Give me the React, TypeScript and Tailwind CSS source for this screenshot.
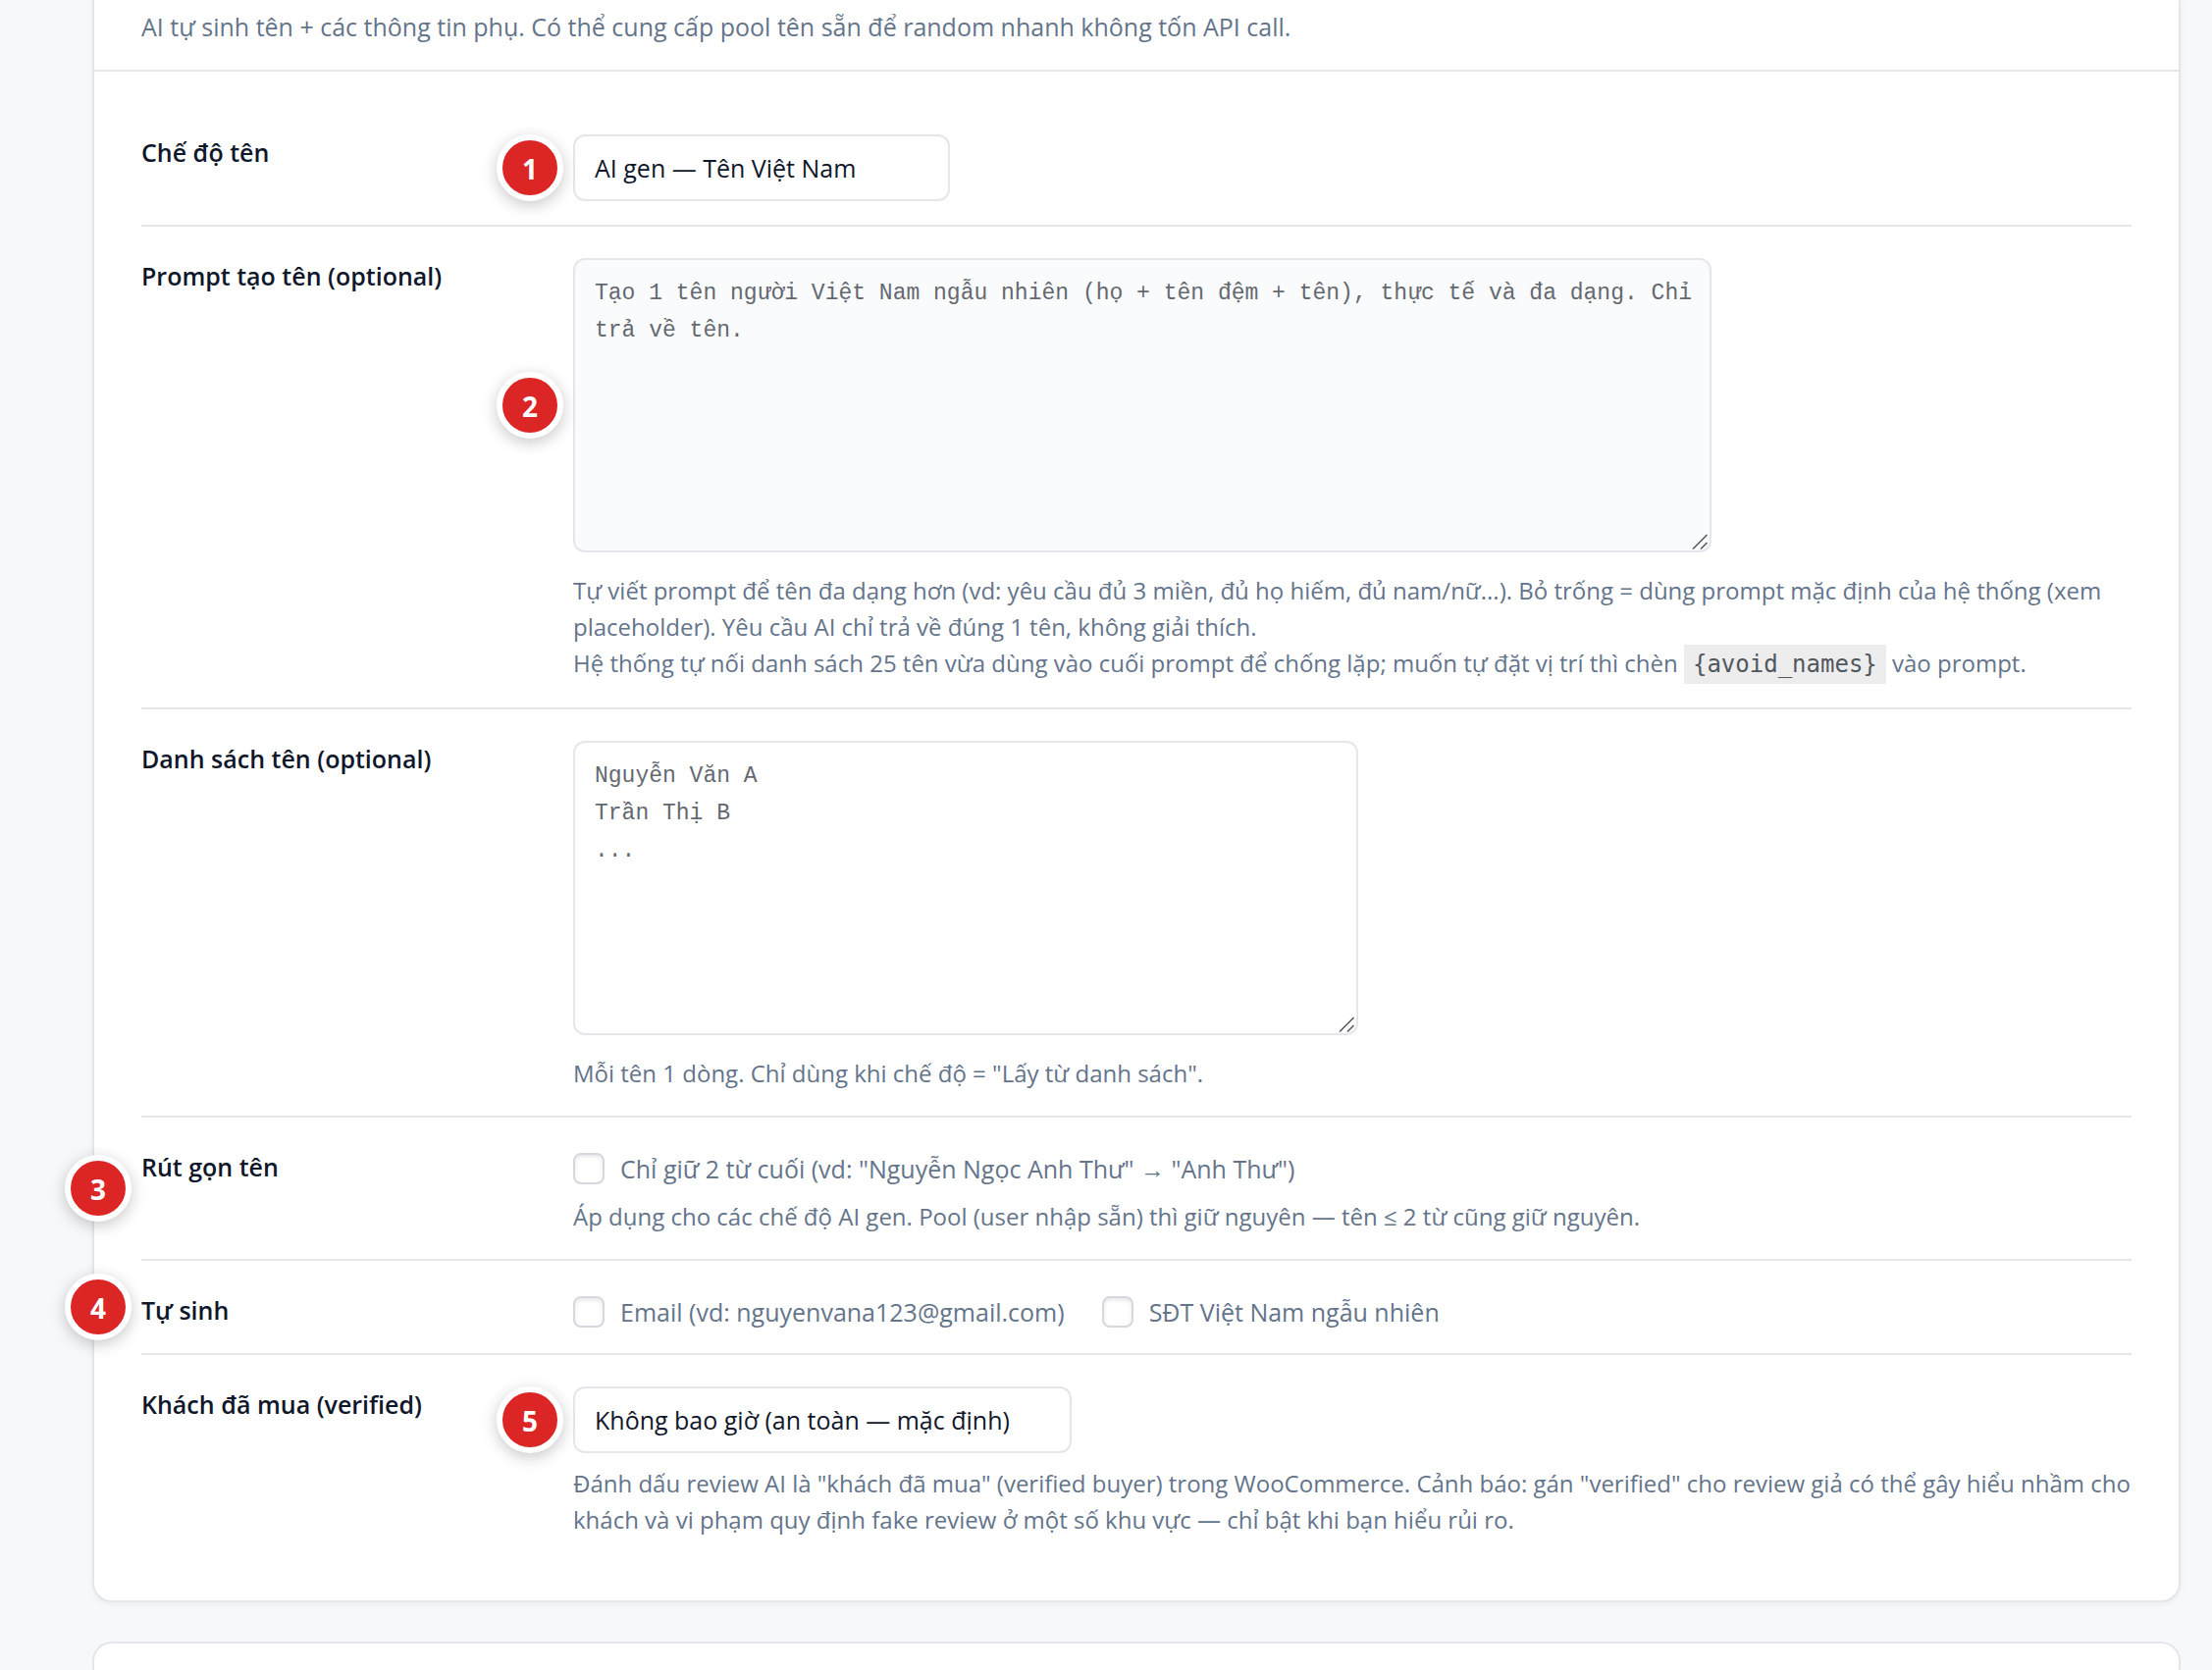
import type { ReactNode } from 'react';

const HELP = 'text-[24px] leading-[37px] text-[#64748b]';
const SELECT =
  'block h-[68px] appearance-none rounded-xl border-2 border-[#e4e6eb] bg-white px-5 pt-[2px] text-[25px] text-[#0f172a]';
const TEXTAREA =
  "block h-[300px] w-full resize-none rounded-xl border-2 border-[#e4e6eb] py-[15px] pl-5 pr-2 font-['Liberation_Mono',monospace] text-[23px] leading-[38px] text-[#1e293b] placeholder:text-[#646970]";

function Badge({ n }: { n: number }) {
  return (
    <span className="absolute right-full top-1/2 mr-[10px] flex size-[68px] -translate-y-1/2 items-center justify-center rounded-full border-6 border-white bg-[#dc2626] pt-[2px] text-[28px] font-bold text-white shadow-[0_4px_16px_rgba(0,0,0,0.22)]">
      {n}
    </span>
  );
}

function ResizeGrip() {
  return (
    <svg
      className="pointer-events-none absolute bottom-[3px] right-[4px]"
      width="16"
      height="16"
      viewBox="0 0 16 16"
      stroke="#50555c"
      strokeWidth="1.5"
      aria-hidden="true"
    >
      <path d="M1 15.5 15.5 1M9 15.5 15.5 9" />
    </svg>
  );
}

type RowProps = {
  label: string;
  htmlFor?: string;
  badge?: number;
  last?: boolean;
  children: ReactNode;
};

function Row({ label, htmlFor, badge, last, children }: RowProps) {
  const labelClass = 'text-[25px] leading-[37px] font-semibold text-[#0f172a]';
  return (
    <div
      className={
        last
          ? 'relative grid grid-cols-[440px_minmax(0,1fr)] pt-8 pb-6'
          : 'relative grid grid-cols-[440px_minmax(0,1fr)] border-b-2 border-[#e4e6eb] pt-8 pb-6'
      }
    >
      {badge && <Badge n={badge} />}
      {htmlFor ? (
        <label htmlFor={htmlFor} className={labelClass}>
          {label}
        </label>
      ) : (
        <div className={labelClass}>{label}</div>
      )}
      <div>{children}</div>
    </div>
  );
}

function Check({ children }: { children: ReactNode }) {
  return (
    <label className="flex items-center gap-4 pt-[2px] text-[25px] leading-9 text-[#64748b]">
      <input
        type="checkbox"
        className="size-8 appearance-none rounded-lg border-2 border-[#d5d8de] bg-white shadow-[inset_0_2px_4px_rgba(0,0,0,0.1)] checked:bg-[#dc2626]"
      />
      {children}
    </label>
  );
}

export default function App() {
  return (
    <div className="flex min-h-screen flex-col gap-10 bg-[#f7f8fa] pl-[94px] pr-8 font-['Open_Sans','Noto_Sans',sans-serif]">
      <section className="rounded-b-[20px] border-2 border-t-0 border-[#e4e6eb] bg-white shadow-[0_2px_6px_rgba(15,23,42,0.05)]">
        <header className="border-b-2 border-[#e4e6eb] px-12 pt-[9px] pb-[25px]">
          <p className="text-[25px] leading-[37px] text-[#64748b]">
            AI tự sinh tên + các thông tin phụ. Có thể cung cấp pool tên sẵn để random nhanh không tốn API call.
          </p>
        </header>

        <div className="px-12 py-8">
          <Row label="Chế độ tên" htmlFor="name-mode">
            <div className="relative w-[384px]">
              <Badge n={1} />
              <select id="name-mode" className={`${SELECT} w-full`}>
                <option>AI gen — Tên Việt Nam</option>
                <option>Lấy từ danh sách</option>
              </select>
            </div>
          </Row>

          <Row label="Prompt tạo tên (optional)" htmlFor="name-prompt">
            <div className="relative w-[1160px] max-w-full">
              <Badge n={2} />
              <textarea
                id="name-prompt"
                className={`${TEXTAREA} bg-[#fafbfd]`}
                placeholder="Tạo 1 tên người Việt Nam ngẫu nhiên (họ + tên đệm + tên), thực tế và đa dạng. Chỉ trả về tên."
              />
              <ResizeGrip />
            </div>
            <p className={`${HELP} mt-5 pb-[3px]`}>
              Tự viết prompt để tên đa dạng hơn (vd: yêu cầu đủ 3 miền, đủ họ hiếm, đủ nam/nữ...). Bỏ trống = dùng
              prompt mặc định của hệ thống (xem placeholder). Yêu cầu AI chỉ trả về đúng 1 tên, không giải thích.
              <br />
              Hệ thống tự nối danh sách 25 tên vừa dùng vào cuối prompt để chống lặp; muốn tự đặt vị trí thì chèn{' '}
              <code className="bg-[#ededee] px-[9px] py-[6px] font-['DejaVu_Sans_Mono',monospace] text-[24px] leading-none text-[#50575e]">
                {'{avoid_names}'}
              </code>{' '}
              vào prompt.
            </p>
          </Row>

          <Row label="Danh sách tên (optional)" htmlFor="name-list">
            <div className="relative w-[800px] max-w-full">
              <textarea
                id="name-list"
                className={`${TEXTAREA} bg-white`}
                placeholder={'Nguyễn Văn A\nTrần Thị B\n...'}
              />
              <ResizeGrip />
            </div>
            <p className={`${HELP} mt-5 pb-px`}>Mỗi tên 1 dòng. Chỉ dùng khi chế độ = "Lấy từ danh sách".</p>
          </Row>

          <Row label="Rút gọn tên" badge={3}>
            <Check>Chỉ giữ 2 từ cuối (vd: "Nguyễn Ngọc Anh Thư" → "Anh Thư")</Check>
            <p className={`${HELP} mt-3 pb-px`}>
              Áp dụng cho các chế độ AI gen. Pool (user nhập sẵn) thì giữ nguyên — tên ≤ 2 từ cũng giữ nguyên.
            </p>
          </Row>

          <Row label="Tự sinh" badge={4}>
            <div className="flex flex-wrap gap-x-[38px]">
              <Check>Email (vd: nguyenvana123@gmail.com)</Check>
              <Check>SĐT Việt Nam ngẫu nhiên</Check>
            </div>
          </Row>

          <Row label="Khách đã mua (verified)" htmlFor="verified" last>
            <div className="relative w-[508px]">
              <Badge n={5} />
              <select id="verified" className={`${SELECT} w-full`}>
                <option>Không bao giờ (an toàn — mặc định)</option>
                <option>Luôn luôn</option>
              </select>
            </div>
            <p className={`${HELP} mt-3 pb-2`}>
              Đánh dấu review AI là "khách đã mua" (verified buyer) trong WooCommerce. Cảnh báo: gán "verified" cho
              review giả có thể gây hiểu nhầm cho khách và vi phạm quy định fake review ở một số khu vực — chỉ bật khi
              bạn hiểu rủi ro.
            </p>
          </Row>
        </div>
      </section>

      <section className="flex-1 rounded-t-[20px] border-2 border-b-0 border-[#e4e6eb] bg-white" />
    </div>
  );
}
